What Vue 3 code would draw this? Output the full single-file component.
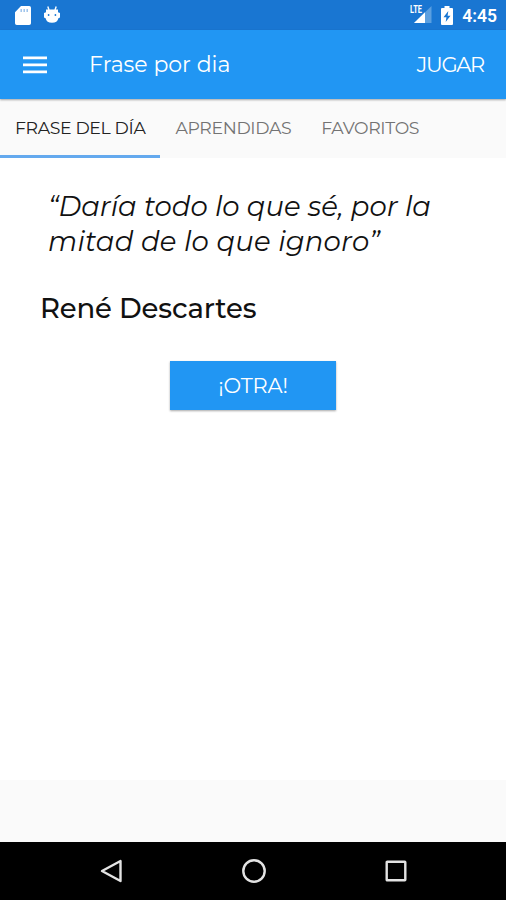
<template>
  <div class="screen">
    <div class="status-bar">
      <div class="status-left">
        <svg class="icon-sd" viewBox="0 0 16 19" fill="#fff">
          <path d="M6 0h8.2A1.8 1.8 0 0 1 16 1.8v15.4a1.8 1.8 0 0 1-1.8 1.8H1.8A1.8 1.8 0 0 1 0 17.2V6.2z"/>
          <path d="M6.2 3v3M9.2 3v3M12.2 3v3" stroke="#9dc3ec" stroke-width="1.5"/>
        </svg>
        <svg class="icon-bug" viewBox="0 0 16 18">
          <path d="M3.8 0.6L5 4M12.2 0.6L11 4" stroke="#fff" stroke-width="1.4"/>
          <path d="M2 3.5h12v2.8l2 .8v4.5l-1.6.6a6.5 5.5 0 0 1-12.8 0L0 11.6V7.1l2-.8z" fill="#fff"/>
          <circle cx="4.6" cy="9" r="0.9" fill="#1976d2"/>
          <circle cx="11.4" cy="9" r="0.9" fill="#1976d2"/>
        </svg>
      </div>
      <div class="status-right">
        <svg class="icon-signal" viewBox="0 0 24 24">
          <path d="M22.5 5v17H5z" fill="#5b9fe0"/>
          <path d="M16 11.3V22H5z" fill="#fff"/>
          <text x="1" y="12" font-size="10" font-weight="700" textLength="12" lengthAdjust="spacingAndGlyphs" fill="#fff">LTE</text>
        </svg>
        <svg class="icon-battery" viewBox="0 0 12 19">
          <path d="M3.5 0h5v2H11a1 1 0 0 1 1 1v15a1 1 0 0 1-1 1H1a1 1 0 0 1-1-1V3a1 1 0 0 1 1-1h2.5z" fill="#fff"/>
          <path d="M7.3 5L2.5 11.2h2.9L4.7 16l4.8-6.2H6.600z" fill="#1976d2"/>
        </svg>
        <span class="clock">4:45</span>
      </div>
    </div>

    <header class="toolbar">
      <button class="btn-menu" aria-label="Menu">
        <svg viewBox="0 0 24 18" fill="#fff">
          <path d="M0 0.5h24v2.7H0zM0 7.5h24v2.7H0zM0 14.5h24v2.7H0z"/>
        </svg>
      </button>
      <h1>Frase por dia</h1>
      <button class="btn-play">JUGAR</button>
    </header>

    <nav class="tabs">
      <button
        v-for="tab in tabs"
        :key="tab.id"
        class="tab"
        :class="{ active: tab.id === activeTab }"
        @click="activeTab = tab.id"
      >
        {{ tab.label }}
      </button>
    </nav>

    <main class="content">
      <blockquote>
        <span v-for="(line, i) in quote" :key="i" class="line">{{ line }}</span>
      </blockquote>
      <div class="author">René Descartes</div>
      <button class="btn-other">¡OTRA!</button>
    </main>

    <div class="ad-space"></div>

    <footer class="nav-bar">
      <svg viewBox="0 0 26 26"><path d="M21.5 3v20L3 13z"/></svg>
      <svg viewBox="0 0 26 26"><circle cx="13" cy="13" r="10.7"/></svg>
      <svg viewBox="0 0 26 26"><rect x="3.7" y="3.7" width="18.6" height="18.6" rx="0.5"/></svg>
    </footer>
  </div>
</template>

<script setup>
import { ref } from "vue";

const tabs = [
  { id: "daily", label: "FRASE DEL DÍA" },
  { id: "learned", label: "APRENDIDAS" },
  { id: "favorites", label: "FAVORITOS" },
];
const activeTab = ref("daily");

const quote = ["“Daría todo lo que sé, por la", "mitad de lo que ignoro”"];
</script>

<style>
body {
  margin: 0;
  background: #fff;
}
</style>

<style scoped>
.screen {
  display: flex;
  flex-direction: column;
  width: 506px;
  height: 900px;
  overflow: hidden;
  background: #fff;
  color: #111;
  font-family: Montserrat, Inter, sans-serif;
}

button {
  padding: 0;
  border: none;
  background: none;
  color: inherit;
  font: inherit;
  white-space: nowrap;
  cursor: pointer;
}

svg {
  display: block;
}

.status-bar {
  display: flex;
  justify-content: space-between;
  height: 30px;
  padding: 0 9px 0 15px;
  box-sizing: border-box;
  background: #1976d2;
  color: #fff;
  font-family: Roboto, sans-serif;
}

.status-left,
.status-right {
  display: flex;
  align-items: center;
}

.icon-sd {
  width: 16px;
  height: 19px;
}

.icon-bug {
  width: 16px;
  height: 18px;
  margin-left: 13px;
}

.icon-signal {
  width: 24px;
  height: 24px;
  margin-bottom: 4px;
}

.icon-battery {
  width: 12px;
  height: 19px;
  margin-left: 8px;
}

.clock {
  margin-left: 9px;
  padding-top: 1px;
  font-size: 17.5px;
  font-weight: 600;
}

.toolbar {
  display: flex;
  align-items: center;
  flex-shrink: 0;
  height: 69px;
  padding: 0 22px 0 23px;
  box-sizing: border-box;
  background: #2196f3;
  color: #fff;
  box-shadow: 0 1px 2px rgba(0, 0, 0, 0.35);
  z-index: 1;
}

.btn-menu svg {
  width: 24px;
  height: 18px;
}

h1 {
  flex: 1;
  margin: 0 0 0 42px;
  font-size: 22px;
  font-weight: 400;
}

.btn-play {
  font-size: 21px;
  letter-spacing: -1.3px;
}

.tabs {
  display: flex;
  flex-shrink: 0;
  height: 59px;
  background: #fafafa;
}

.tab {
  padding: 0 15px;
  border-bottom: 3px solid transparent;
  color: #737373;
  font-size: 17.3px;
  letter-spacing: -0.35px;
}

.tab.active {
  color: #222;
  border-bottom-color: #64a9ee;
}

.content {
  display: flex;
  flex-direction: column;
  align-items: flex-start;
  flex: 1;
  padding: 31px 40px 0;
}

blockquote {
  margin: 0 0 0 8px;
  font-size: 27.5px;
  font-style: italic;
  font-weight: 400;
  line-height: 34.5px;
}

.line {
  display: block;
  white-space: nowrap;
}

.line:last-child {
  letter-spacing: 0.2px;
}

.author {
  margin-top: 33px;
  font-size: 27.5px;
  font-weight: 500;
  letter-spacing: -0.15px;
  line-height: 34px;
}

.btn-other {
  align-self: center;
  width: 166px;
  height: 49px;
  margin-top: 36px;
  background: #2196f3;
  color: #fff;
  font-size: 21px;
  letter-spacing: -0.2px;
  box-shadow: 0 1px 2px rgba(0, 0, 0, 0.35);
}

.ad-space {
  flex-shrink: 0;
  height: 62px;
  background: #fafafa;
}

.nav-bar {
  display: flex;
  align-items: center;
  justify-content: space-between;
  flex-shrink: 0;
  height: 58px;
  padding: 0 97px 0 99px;
  box-sizing: border-box;
  background: #000;
}

.nav-bar svg {
  width: 26px;
  height: 26px;
  fill: none;
  stroke: #e3e3e3;
  stroke-width: 2.4;
  stroke-linejoin: round;
}
</style>
